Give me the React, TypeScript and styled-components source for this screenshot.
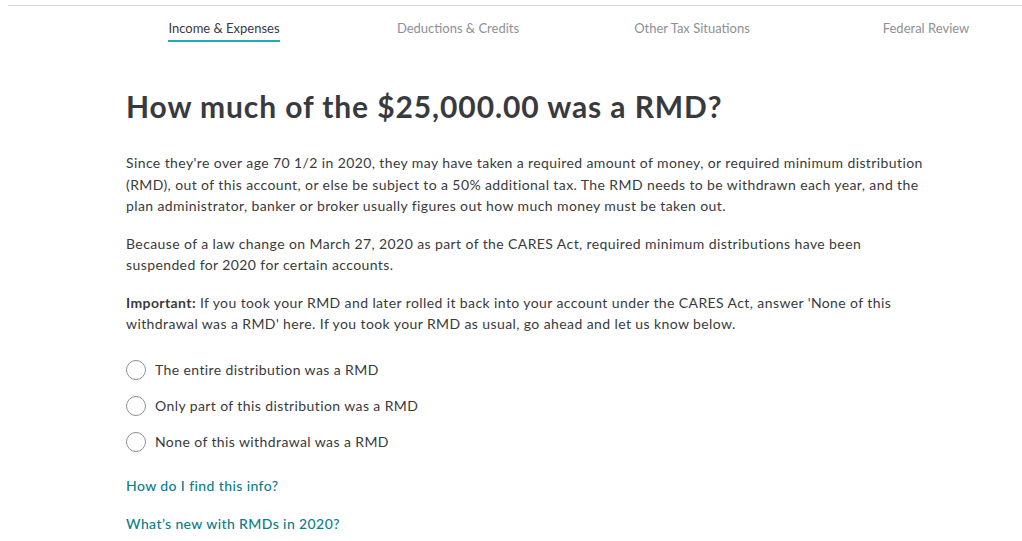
import React from 'react';
import styled, { createGlobalStyle } from 'styled-components';

const GlobalStyle = createGlobalStyle`
  body {
    margin: 0;
    background: #ffffff;
    font-family: Lato, "Noto Sans", "Liberation Sans", sans-serif;
    color: #393a3d;
  }
`;

const Page = styled.div`
  width: 1022px;
  height: 541px;
  overflow: hidden;
`;

const Nav = styled.nav`
  margin: 5px 0 0 8px;
  border-top: 1px solid #d6d7da;
  padding-left: 99px;
  display: grid;
  grid-template-columns: repeat(4, 234px);
  height: 40px;
`;

const TabCell = styled.div`
  display: flex;
  justify-content: center;
  align-items: flex-start;
  padding-top: 14px;
`;

const Tab = styled.span<{ $active?: boolean }>`
  font-size: 13px;
  line-height: 16px;
  padding-bottom: 4px;
  white-space: nowrap;
  color: ${p => (p.$active ? '#393a3d' : '#8d9096')};
  border-bottom: 2px solid ${p => (p.$active ? '#21abb5' : 'transparent')};
`;

const Main = styled.main`
  padding: 42px 0 0 126px;
  width: 806px;
`;

const Title = styled.h1`
  margin: 0 0 28px;
  font-size: 30px;
  line-height: 36px;
  font-weight: 700;
  letter-spacing: 0.9px;
  color: #393a3d;
`;

const Para = styled.p`
  margin: 0 0 16px;
  font-size: 14px;
  line-height: 21.5px;
  letter-spacing: 0.4px;
  color: #393a3d;
`;

const Strong = styled.strong`
  font-weight: 700;
`;

const Options = styled.div`
  display: flex;
  flex-direction: column;
  gap: 16px;
  margin-top: 25px;
`;

const Option = styled.label`
  display: flex;
  align-items: center;
  gap: 9px;
  font-size: 14px;
  line-height: 20px;
  letter-spacing: 0.4px;
  color: #393a3d;
  cursor: pointer;
`;

const Radio = styled.span`
  width: 18px;
  height: 18px;
  border-radius: 50%;
  border: 1px solid #8d9096;
  flex: none;
`;

const Links = styled.div`
  display: flex;
  flex-direction: column;
  gap: 18px;
  margin-top: 24px;
`;

const HelpLink = styled.a`
  font-size: 14px;
  line-height: 20px;
  font-weight: 500;
  letter-spacing: 0.4px;
  color: #0b7d8b;
  text-decoration: none;
`;

const tabs = ['Income & Expenses', 'Deductions & Credits', 'Other Tax Situations', 'Federal Review'];
const options = [
  'The entire distribution was a RMD',
  'Only part of this distribution was a RMD',
  'None of this withdrawal was a RMD',
];

export default function App() {
  return (
    <Page>
      <GlobalStyle />
      <Nav>
        {tabs.map((t, i) => (
          <TabCell key={t}>
            <Tab $active={i === 0}>{t}</Tab>
          </TabCell>
        ))}
      </Nav>
      <Main>
        <Title>How much of the $25,000.00 was a RMD?</Title>
        <Para>
          Since they're over age 70 1/2 in 2020, they may have taken a required amount of money, or required minimum
          distribution (RMD), out of this account, or else be subject to a 50% additional tax. The RMD needs to be
          withdrawn each year, and the plan administrator, banker or broker usually figures out how much money must be
          taken out.
        </Para>
        <Para>
          Because of a law change on March 27, 2020 as part of the CARES Act, required minimum distributions have been
          suspended for 2020 for certain accounts.
        </Para>
        <Para>
          <Strong>Important:</Strong> If you took your RMD and later rolled it back into your account under the CARES
          Act, answer 'None of this withdrawal was a RMD' here. If you took your RMD as usual, go ahead and let us know
          below.
        </Para>
        <Options>
          {options.map(o => (
            <Option key={o}>
              <Radio />
              {o}
            </Option>
          ))}
        </Options>
        <Links>
          <HelpLink href="#">How do I find this info?</HelpLink>
          <HelpLink href="#">What’s new with RMDs in 2020?</HelpLink>
        </Links>
      </Main>
    </Page>
  );
}
